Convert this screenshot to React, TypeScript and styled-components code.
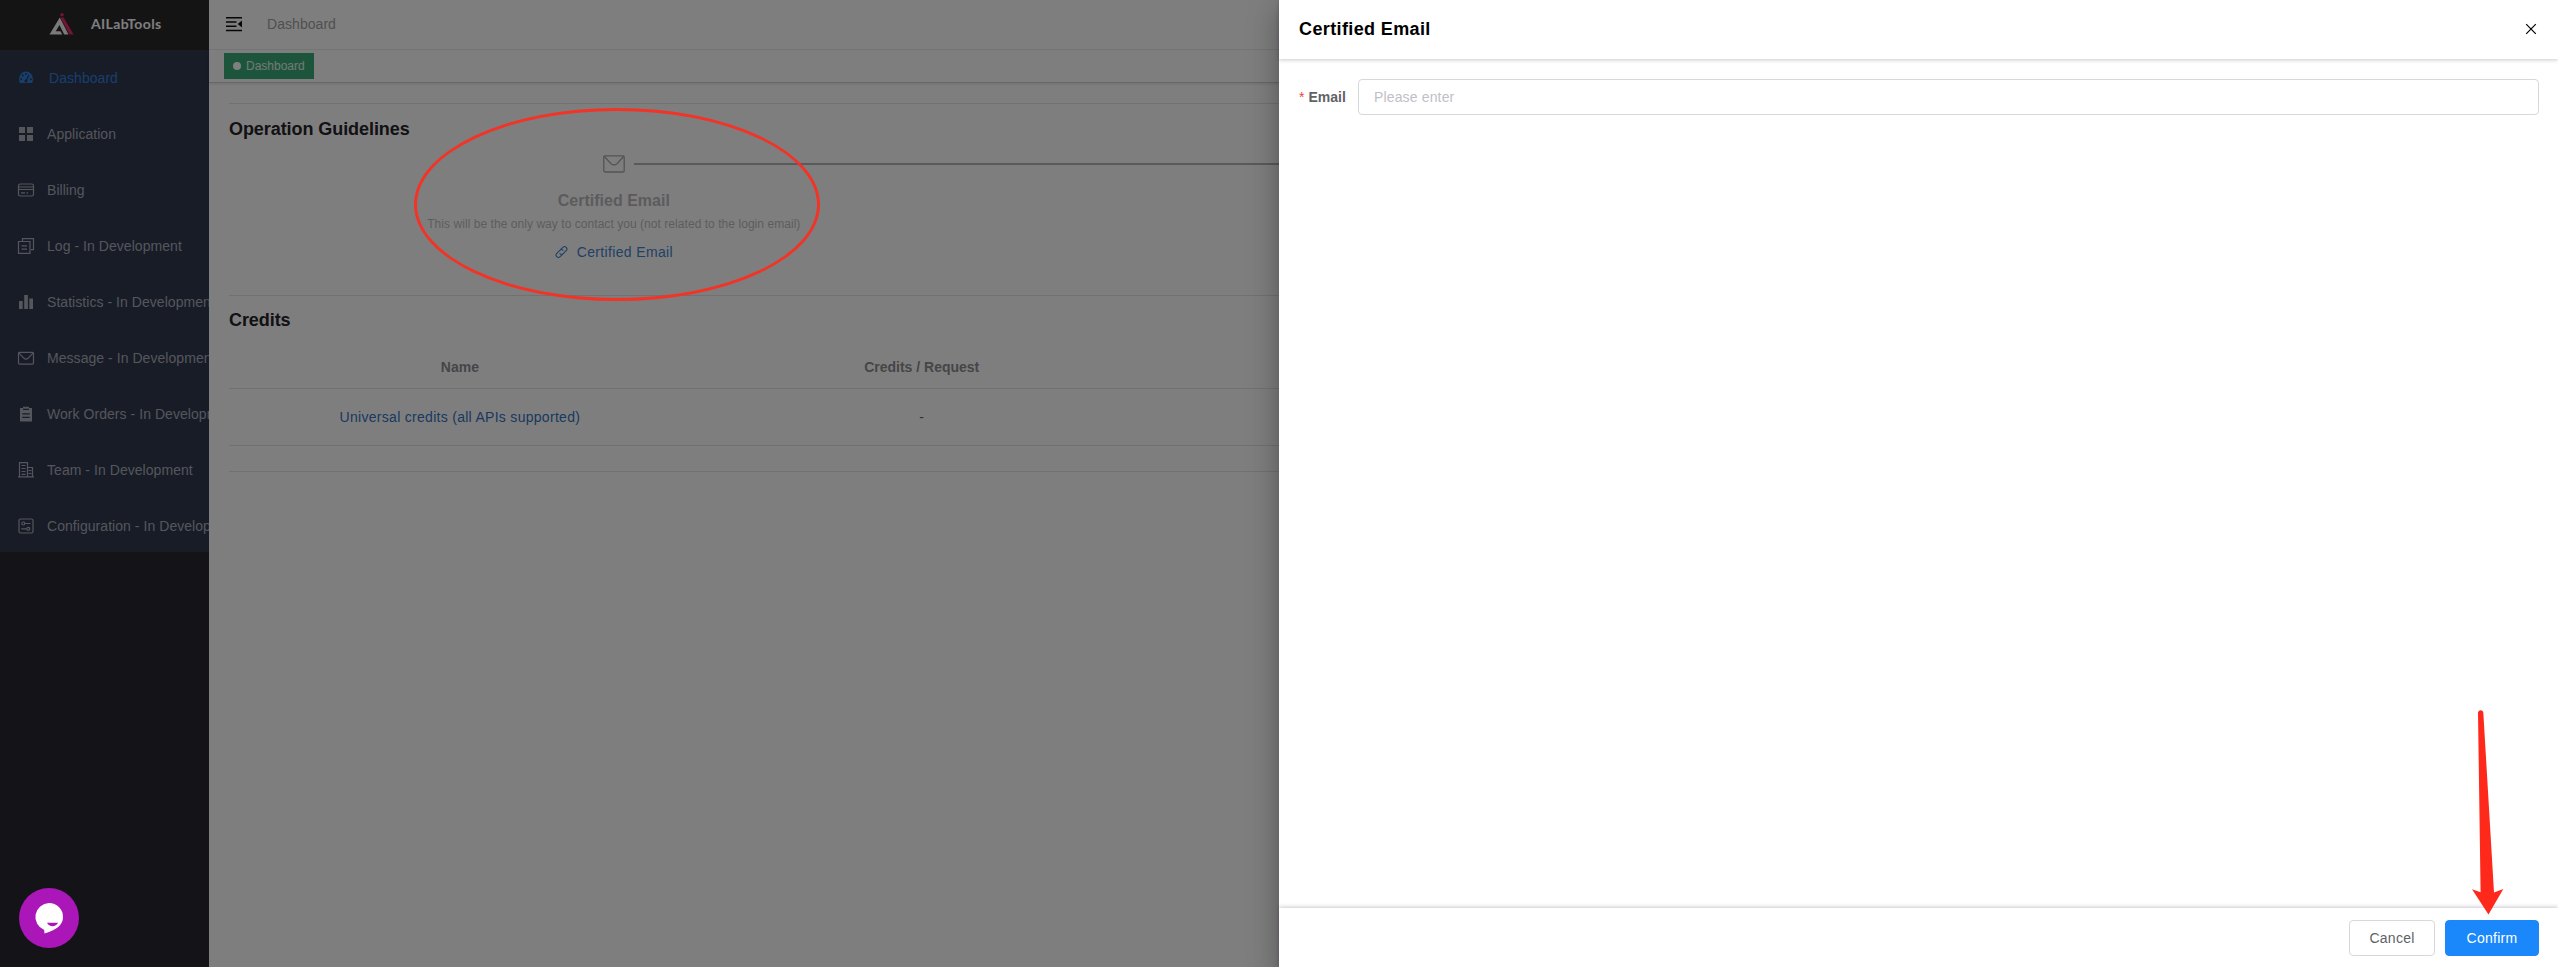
import React from "react";
import styled, { createGlobalStyle } from "styled-components";

const GlobalStyle = createGlobalStyle`
  * { box-sizing: border-box; }
  body {
    margin: 0;
    overflow: hidden;
    font-family: "Liberation Sans", Arial, sans-serif;
    font-size: 14px;
    color: #303133;
  }
`;

const Page = styled.div`
  position: relative;
  display: flex;
  width: 100vw;
  height: 967px;
  overflow: hidden;
  background: #fffdff;
`;

/* ---------- sidebar ---------- */

const Sidebar = styled.aside`
  display: flex;
  flex-direction: column;
  flex: none;
  width: 209px;
  height: 100%;
  background: #292830;
  overflow: hidden;
`;

const Brand = styled.div`
  display: flex;
  align-items: center;
  height: 50px;
  flex: none;
  padding: 0 0 2px 49px;
  gap: 16px;
  background: #29282b;
`;

const BrandName = styled.span`
  font: 700 14px/20px Lato, sans-serif;
  letter-spacing: 0.35px;
  color: #ffffff;
`;

const Menu = styled.nav`
  display: flex;
  flex-direction: column;
  height: 502px;
  overflow: hidden;
  background: #30384e;
`;

const MenuItem = styled.a<{ $active?: boolean }>`
  display: flex;
  align-items: center;
  flex: none;
  height: 56px;
  padding-left: 16px;
  gap: ${(p) => (p.$active ? 13 : 11)}px;
  white-space: nowrap;
  letter-spacing: 0.05px;
  color: ${(p) => (p.$active ? "#2e7fdc" : "#a9acb8")};
  svg { flex: none; }
`;

/* ---------- main area ---------- */

const Main = styled.main`
  flex: 1;
  min-width: 0;
  display: flex;
  flex-direction: column;
`;

const Navbar = styled.header`
  display: flex;
  align-items: center;
  height: 50px;
  padding: 0 0 2px 17px;
  gap: 25px;
  border-bottom: 1px solid #f0eef0;
`;

const Crumb = styled.span`
  color: #a09fa2;
  letter-spacing: 0.05px;
`;

const TagsBar = styled.div`
  height: 33px;
  padding: 3px 15px;
  border-bottom: 1px solid #d2d0d2;
  box-shadow: 0 1px 3px rgba(0, 0, 0, 0.12);
`;

const Tag = styled.span`
  display: inline-flex;
  align-items: center;
  gap: 5px;
  height: 26px;
  width: 90px;
  padding-left: 9px;
  background: #3aab78;
  color: #e6f3ec;
  font-size: 12px;
  &::before {
    content: "";
    width: 8px;
    height: 8px;
    border-radius: 50%;
    background: #fff;
  }
`;

const Content = styled.div`
  padding: 20px 20px 0;
`;

const Section = styled.section<{ $height: number }>`
  height: ${(p) => p.$height}px;
  border-top: 1px solid #e2e1e4;
`;

const SectionTitle = styled.h2<{ $top: number }>`
  margin: 0;
  padding-top: ${(p) => p.$top}px;
  font-size: 18px;
  line-height: 24px;
  letter-spacing: -0.07px;
  color: #242428;
`;

const Steps = styled.div`
  display: grid;
  grid-template-columns: repeat(3, 1fr);
`;

const Step = styled.div`
  display: flex;
  flex-direction: column;
  align-items: center;
`;

const StepHead = styled.div`
  display: grid;
  grid-template-columns: 1fr 22px 1fr;
  align-items: center;
  column-gap: 9px;
  align-self: stretch;
  height: 28px;
  margin-top: 9px;
`;

const StepLine = styled.i`
  grid-column: 3;
  height: 2px;
  margin-right: -360px;
  background: #b4b3b6;
`;

const StepIcon = styled.span`
  grid-column: 2;
  display: flex;
`;

const StepTitle = styled.div`
  margin-top: 11px;
  font-size: 16px;
  font-weight: 700;
  line-height: 24px;
  color: #b8b6b9;
`;

const StepText = styled.div`
  margin-top: 3px;
  font-size: 12px;
  line-height: 16px;
  letter-spacing: 0.05px;
  color: #bbb9bd;
`;

const LinkButton = styled.a`
  display: flex;
  align-items: center;
  gap: 9px;
  margin-top: 10px;
  height: 20px;
  line-height: 20px;
  letter-spacing: 0.35px;
  color: #3f82c9;
`;

const Table = styled.div`
  display: grid;
  grid-template-columns: repeat(5, 1fr);
  margin-top: 14px;
`;

const Cell = styled.div<{ $head?: boolean; $link?: boolean }>`
  display: flex;
  align-items: center;
  justify-content: center;
  height: ${(p) => (p.$head ? 43 : 57)}px;
  border-bottom: 1px solid #e2e1e4;
  font-weight: ${(p) => (p.$head ? 700 : 400)};
  letter-spacing: ${(p) => (p.$head ? 0 : 0.29)}px;
  color: ${(p) => (p.$head ? "#8c8a8f" : p.$link ? "#3272bd" : "#606266")};
`;

/* ---------- drawer ---------- */

const Mask = styled.div`
  position: absolute;
  inset: 0;
  display: flex;
  justify-content: flex-end;
  background: rgba(0, 0, 0, 0.5);
`;

const Drawer = styled.section`
  display: flex;
  flex-direction: column;
  width: 50%;
  height: 100%;
  background: #fff;
  box-shadow: 0 8px 10px -5px rgba(0, 0, 0, 0.2), 0 16px 24px 2px rgba(0, 0, 0, 0.14),
    0 6px 30px 5px rgba(0, 0, 0, 0.12);
`;

const DrawerHeader = styled.header`
  display: flex;
  align-items: center;
  justify-content: space-between;
  height: 59px;
  padding: 0 21px 1px 20px;
  box-shadow: 0 1px 4px rgba(40, 20, 60, 0.24);
`;

const DrawerTitle = styled.h1`
  margin: 0;
  font-size: 18px;
  line-height: 24px;
  letter-spacing: 0.38px;
  color: #000;
`;

const DrawerBody = styled.div`
  flex: 1;
  padding: 20px 19px 20px 20px;
`;

const Field = styled.label`
  display: flex;
  align-items: center;
`;

const FieldLabel = styled.span`
  width: 59px;
  font-weight: 700;
  color: #606266;
  &::before {
    content: "*";
    margin-right: 4px;
    font-weight: 400;
    color: #f03c3c;
  }
`;

const Input = styled.input`
  flex: 1;
  height: 36px;
  padding: 0 15px;
  border: 1px solid #d8d8da;
  border-radius: 4px;
  font: 14px "Liberation Sans", Arial, sans-serif;
  letter-spacing: 0.15px;
  outline: none;
  &::placeholder { color: #bfc0c5; }
`;

const DrawerFooter = styled.footer`
  display: flex;
  justify-content: flex-end;
  gap: 10px;
  height: 59px;
  padding: 12px 19px;
  box-shadow: 0 -1px 4px rgba(40, 20, 60, 0.24);
`;

const Button = styled.button<{ $primary?: boolean }>`
  width: ${(p) => (p.$primary ? 94 : 86)}px;
  height: 36px;
  padding: 0;
  border: 1px solid ${(p) => (p.$primary ? "#1a87fb" : "#d8d7dc")};
  border-radius: 4px;
  background: ${(p) => (p.$primary ? "#1a87fb" : "#fff")};
  color: ${(p) => (p.$primary ? "#fff" : "#606266")};
  font: 14px "Liberation Sans", Arial, sans-serif;
  letter-spacing: 0.25px;
`;

/* ---------- overlays ---------- */

const ChatBubble = styled.button`
  position: absolute;
  left: 19px;
  top: 888px;
  width: 60px;
  height: 60px;
  padding: 0;
  border: 0;
  border-radius: 50%;
  background: #aa16b8;
  svg { display: block; }
`;

const Highlight = styled.div`
  position: absolute;
  left: 414px;
  top: 108px;
  width: 406px;
  height: 193px;
  border: 3px solid #f23325;
  border-radius: 50%;
`;

const Pointer = styled.svg`
  position: absolute;
  left: 2470px;
  top: 708px;
`;

/* ---------- icons ---------- */

const iconShapes: Record<string, React.ReactNode> = {
  gauge: (
    <g>
      <path fill="currentColor" d="M3 11.500a7 8 0 0 1 14 0c0 1.200-.4 2.400-1 3.500H4c-.6-1.100-1-2.300-1-3.500z" />
      <g fill="#30384e">
        <circle cx="5.200" cy="11.300" r="1" />
        <circle cx="6.700" cy="7.600" r="1" />
        <circle cx="10" cy="5.900" r="1" />
        <circle cx="14.800" cy="11.300" r="1" />
      </g>
      <path d="M10.300 12.600 12.900 6.800" stroke="#30384e" strokeWidth="1.200" />
      <circle cx="10" cy="13" r="1.600" fill="#30384e" />
    </g>
  ),
  grid: <path fill="currentColor" d="M3 3h6v6H3zM11 3h6v6h-6zM3 11h6v6H3zM11 11h6v6h-6z" />,
  card: (
    <g fill="none" stroke="currentColor" strokeWidth="1.200">
      <rect x="2.500" y="4" width="15" height="12" rx="1.800" />
      <path d="M2.500 7h15M2.500 9.500h15M5 12.800h4M10.500 12.800h1.500" />
    </g>
  ),
  copy: (
    <g fill="none" stroke="currentColor" strokeWidth="1.200">
      <path d="M6.500 5V2.600h11v11H15" />
      <path d="M2.500 5.500h11.500v11.900H2.500zM5.500 9.800h5.500M5.500 13.200h5.500" />
    </g>
  ),
  bars: <path fill="currentColor" d="M3 9h3.700v8H3zM8.200 3h3.700v14H8.200zM13.300 6.600H17V17h-3.700z" />,
  mail: (
    <g fill="none" stroke="currentColor" strokeWidth="1.200">
      <rect x="2.500" y="4.300" width="15" height="11.800" rx="1" />
      <path d="M2.800 4.800 8 10.300q2 1.600 4 0l5.200-5.500" />
    </g>
  ),
  clipboard: (
    <g>
      <path fill="currentColor" d="M4 4h3V2.800h6V4h3v13.500H4z" />
      <path d="M7 5.300h6M6.300 9.800h7.400M6.300 13.400h7.400" stroke="#30384e" strokeWidth="1.200" />
    </g>
  ),
  building: (
    <g fill="none" stroke="currentColor" strokeWidth="1.200">
      <path d="M3.500 16.500V2.700h8v13.800M11.500 7.500h5v9M2 16.900h16M5.500 5.500h4M5.500 8.500h4M5.500 11.500h4M5.500 14.300h4M12.500 10.500h3M12.500 13.500h3" />
    </g>
  ),
  config: (
    <g fill="none" stroke="currentColor" strokeWidth="1.200">
      <rect x="3" y="3" width="14" height="14" rx="1.500" />
      <circle cx="7.300" cy="7.500" r="1.500" />
      <circle cx="12.300" cy="12.800" r="1.500" />
      <path d="M8.800 7.500H14.500M5.300 12.800h5.500" />
    </g>
  ),
};

const MenuIcon = ({ name }: { name: string }) => (
  <svg width="20" height="20" viewBox="0 0 20 20">{iconShapes[name]}</svg>
);

const Logo = () => (
  <svg width="26" height="24" viewBox="0 0 26 24">
    <path fill="#f4f4f4" d="M.5 22.500 10.800 5.600l8.700 16.900h-4.300L10.500 13l-3.800 6.200h4.800l1.800 3.300z" />
    <path fill="#e32a66" d="M11.300 5.500h3.300l10 17h-4z" />
    <circle cx="13" cy="2.800" r="1.800" fill="#e32a66" />
  </svg>
);

const FoldIcon = () => (
  <svg width="16" height="16" viewBox="0 0 16 16">
    <path d="M0 1.700h16M0 6h10.500M0 10.200h10.500M0 14.400h16" stroke="#0c0c0e" strokeWidth="1.500" />
    <path d="M16 4.500v7L11.600 8z" fill="#0c0c0e" />
  </svg>
);

const StepMailIcon = () => (
  <svg width="22" height="18" viewBox="0 0 22 18" fill="none" stroke="#a9a8ab" strokeWidth="1.300">
    <rect x=".8" y=".8" width="20.400" height="16.200" rx="1.200" />
    <path d="M1.200 1.200 8 8.700q3 2.600 6 0l6.800-7.500" />
  </svg>
);

const LinkIcon = () => (
  <svg width="13" height="14" viewBox="0 0 13 14" fill="none" stroke="#3f82c9" strokeWidth="1.100" strokeLinecap="round">
    <path d="M5.500 4.700 7.900 2.300a2.300 2.300 0 0 1 3.300 3.300L8.200 8.700a2.300 2.300 0 0 1-3.200 0" />
    <path d="M7.500 9.300 5.100 11.700a2.300 2.300 0 0 1-3.300-3.300L4.800 5.300a2.300 2.300 0 0 1 3.200 0" />
  </svg>
);

const menu = [
  { icon: "gauge", label: "Dashboard", active: true },
  { icon: "grid", label: "Application" },
  { icon: "card", label: "Billing" },
  { icon: "copy", label: "Log - In Development" },
  { icon: "bars", label: "Statistics - In Development" },
  { icon: "mail", label: "Message - In Development" },
  { icon: "clipboard", label: "Work Orders - In Development" },
  { icon: "building", label: "Team - In Development" },
  { icon: "config", label: "Configuration - In Development" },
];

export default function App() {
  return (
    <Page>
      <GlobalStyle />
      <Sidebar>
        <Brand>
          <Logo />
          <BrandName>AILabTools</BrandName>
        </Brand>
        <Menu>
          {menu.map((m) => (
            <MenuItem key={m.label} $active={m.active}>
              <MenuIcon name={m.icon} />
              {m.label}
            </MenuItem>
          ))}
        </Menu>
      </Sidebar>

      <Main>
        <Navbar>
          <FoldIcon />
          <Crumb>Dashboard</Crumb>
        </Navbar>
        <TagsBar>
          <Tag>Dashboard</Tag>
        </TagsBar>
        <Content>
          <Section $height={192}>
            <SectionTitle $top={13}>Operation Guidelines</SectionTitle>
            <Steps>
              <Step>
                <StepHead>
                  <StepIcon><StepMailIcon /></StepIcon>
                  <StepLine />
                </StepHead>
                <StepTitle>Certified Email</StepTitle>
                <StepText>This will be the only way to contact you (not related to the login email)</StepText>
                <LinkButton>
                  <LinkIcon />
                  Certified Email
                </LinkButton>
              </Step>
            </Steps>
          </Section>
          <Section $height={176}>
            <SectionTitle $top={12}>Credits</SectionTitle>
            <Table>
              <Cell $head>Name</Cell>
              <Cell $head>Credits / Request</Cell>
              <Cell $head />
              <Cell $head />
              <Cell $head />
              <Cell $link>Universal credits (all APIs supported)</Cell>
              <Cell>-</Cell>
              <Cell />
              <Cell />
              <Cell />
            </Table>
          </Section>
          <Section $height={1} />
        </Content>
      </Main>

      <Mask>
        <Drawer>
          <DrawerHeader>
            <DrawerTitle>Certified Email</DrawerTitle>
            <svg width="12" height="12" viewBox="0 0 12 12">
              <path d="M1.200 1.200l9.600 9.600M10.800 1.200l-9.600 9.600" stroke="#000" strokeWidth="1.200" />
            </svg>
          </DrawerHeader>
          <DrawerBody>
            <Field>
              <FieldLabel>Email</FieldLabel>
              <Input placeholder="Please enter" />
            </Field>
          </DrawerBody>
          <DrawerFooter>
            <Button>Cancel</Button>
            <Button $primary>Confirm</Button>
          </DrawerFooter>
        </Drawer>
      </Mask>

      <ChatBubble>
        <svg width="60" height="60" viewBox="0 0 60 60">
          <path fill="#fff" d="M30 15a14 14 0 0 1 14 14c0 7-5 10.500-9.500 13-3 1.500-6 2.700-9 3.500l-.3-3.500A14 14 0 0 1 30 15z" />
          <path fill="#aa16b8" d="M28 34.800h11c-2 4.600-9 4.600-11 0z" />
        </svg>
      </ChatBubble>
      <Highlight />
      <Pointer width="36" height="210" viewBox="0 0 36 210">
        <path
          fill="#fe281b"
          d="M8 4.500a2.700 2.700 0 0 1 5.300 0L24 184.500l9.300-3.500L18.500 206.500 2 181.300l8.600 3z"
        />
      </Pointer>
    </Page>
  );
}
